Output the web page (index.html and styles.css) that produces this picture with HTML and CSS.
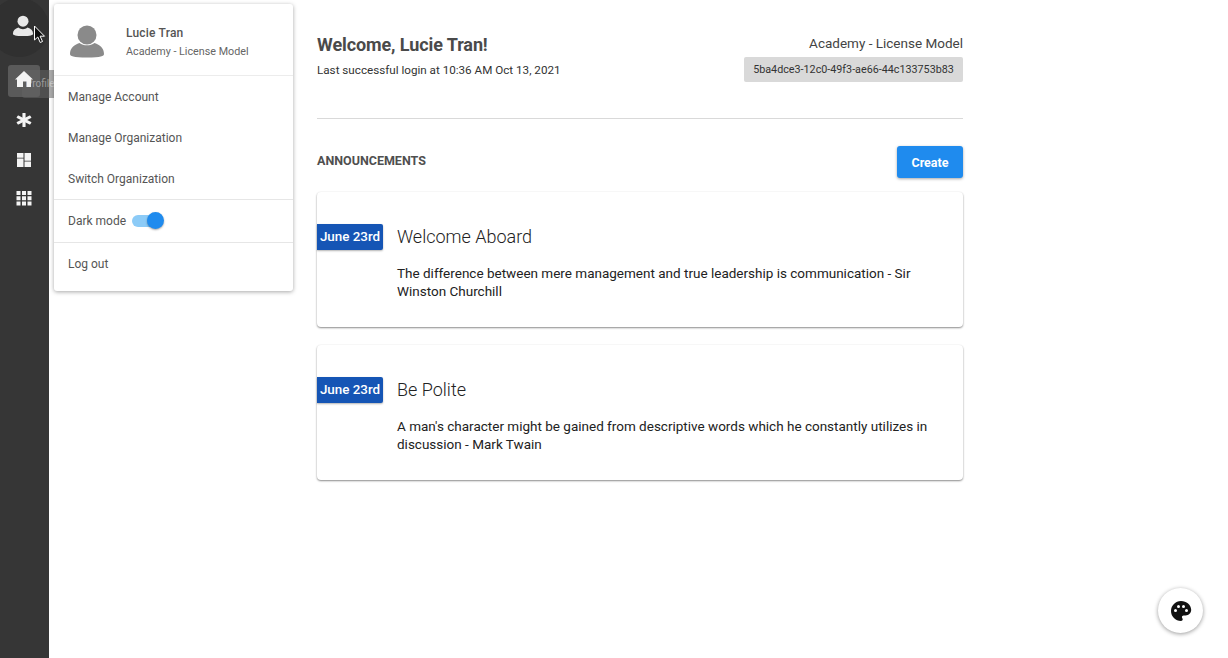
FILE: index.html
```html
<!DOCTYPE html>
<html lang="en">
<head>
<meta charset="utf-8">
<title>Welcome</title>
<link rel="stylesheet" href="styles.css">
</head>
<body>
<div class="app">
  <nav class="sidebar">
    <div class="profile-btn">
      <svg class="i-user" viewBox="0 0 24 24"><circle cx="12" cy="6.800" r="6"/><path d="M1 20.500c0-3.500 2.500-5.500 6-6.800 1.500 1.200 3.200 1.800 5 1.800s3.500-.6 5-1.800c3.500 1.300 6 3.300 6 6.800 0 1.500-3 2.500-11 2.500S1 22 1 20.500z"/></svg>
    </div>
    <div class="nav-item active">
      <svg class="i-nav i-home" viewBox="0 0 18 18"><path d="M9 1 0 9.500h2V17h6v-5.500h3.500V17H16V9.500h2z"/></svg>
      <div class="tooltip">Profile</div>
    </div>
    <div class="nav-item">
      <svg class="i-nav" viewBox="0 0 18 18"><g transform="translate(9 9) scale(1.120 1) translate(-9 -9)"><rect x="7.600" y="2" width="2.800" height="14" rx=".5"/><rect x="7.600" y="2" width="2.800" height="14" rx=".5" transform="rotate(60 9 9)"/><rect x="7.600" y="2" width="2.800" height="14" rx=".5" transform="rotate(120 9 9)"/></g></svg>
    </div>
    <div class="nav-item">
      <svg class="i-nav i-dash" viewBox="0 0 18 18"><path d="M2 2h6.500v4.700H2zM2 7.500h6.500V16H2zM9.500 2H16v7.700H9.500zM9.500 10.500H16V16H9.500z"/></svg>
    </div>
    <div class="nav-item">
      <svg class="i-nav" viewBox="0 0 18 18"><path d="M1.500 2h4v4h-4zM7 2h4v4H7zM12.500 2h4v4h-4zM1.500 7.300h4v4h-4zM7 7.300h4v4H7zM12.500 7.300h4v4h-4zM1.500 12.600h4v4h-4zM7 12.600h4v4H7zM12.500 12.600h4v4h-4z"/></svg>
    </div>
  </nav>

  <main class="main">
    <section class="head">
      <div>
        <h1 class="welcome">Welcome, Lucie Tran!</h1>
        <p class="last-login">Last successful login at 10:36 AM Oct 13, 2021</p>
      </div>
      <div class="org">
        <div class="org-name">Academy - License Model</div>
        <div class="org-id">5ba4dce3-12c0-49f3-ae66-44c133753b83</div>
      </div>
    </section>
    <section class="ann-head">
      <h2 class="ann-title">ANNOUNCEMENTS</h2>
      <button class="create">Create</button>
    </section>
    <article class="card">
      <div class="date">June 23rd</div>
      <div class="card-body">
        <h3 class="card-title">Welcome Aboard</h3>
        <p class="card-text">The difference between mere management and true leadership is communication - Sir Winston Churchill</p>
      </div>
    </article>
    <article class="card">
      <div class="date">June 23rd</div>
      <div class="card-body">
        <h3 class="card-title">Be Polite</h3>
        <p class="card-text">A man's character might be gained from descriptive words which he constantly utilizes in discussion - Mark Twain</p>
      </div>
    </article>
  </main>
</div>

<div class="menu">
  <div class="menu-user">
    <svg class="i-avatar" viewBox="0 0 34 33"><circle cx="17" cy="10" r="9.500"/><path d="M0 29c0-6 4-9 9.500-11 2 1.600 4.800 2.300 7.500 2.300s5.500-.7 7.500-2.300C30 20 34 23 34 29c0 2-3 3.500-17 3.500S0 31 0 29z"/></svg>
    <div class="user-text">
      <div class="user-name">Lucie Tran</div>
      <div class="user-org">Academy - License Model</div>
    </div>
  </div>
  <div class="menu-group">
    <div class="menu-item">Manage Account</div>
    <div class="menu-item">Manage Organization</div>
    <div class="menu-item">Switch Organization</div>
  </div>
  <div class="menu-toggle">
    <span>Dark mode</span>
    <span class="switch"><span class="knob"></span></span>
  </div>
  <div class="menu-logout">Log out</div>
</div>

<svg class="cursor" viewBox="0 0 12 19"><path d="M1 1v14l3.300-3 2.400 5.500 2.300-1-2.400-5.300H11z" fill="#111" stroke="#fff" stroke-width="1"/></svg>

<button class="fab" aria-label="Theme">
  <svg viewBox="0 0 24 24"><path fill-rule="evenodd" d="M12 2C6.500 2 2 6.500 2 12s4.500 10 10 10c.9 0 1.700-.7 1.700-1.700 0-.4-.2-.8-.4-1.100-.3-.3-.4-.7-.4-1.100 0-.9.700-1.700 1.700-1.700h2c3.100 0 5.600-2.500 5.600-5.600C22 5.900 17.500 2 12 2zM6.500 13a1.500 1.500 0 1 1 0-3 1.500 1.500 0 0 1 0 3zm3-4a1.500 1.500 0 1 1 0-3 1.500 1.500 0 0 1 0 3zm5 0a1.500 1.500 0 1 1 0-3 1.500 1.500 0 0 1 0 3zm3 4a1.500 1.500 0 1 1 0-3 1.500 1.500 0 0 1 0 3z"/></svg>
</button>
</body>
</html>
```

FILE: styles.css
```css
* { box-sizing: border-box; }
html, body { margin: 0; height: 100%; overflow: hidden; }
body { font-family: Roboto, "Liberation Sans", sans-serif; background: #fff; color: #111; }
h1, h2, h3, p { margin: 0; }

.app { display: flex; height: 658px; }

.sidebar { width: 49px; flex: none; background: #363636; display: flex; flex-direction: column; }
.profile-btn { position: relative; height: 65px; flex: none; padding: 15px 0 0 12px; }
.profile-btn::before { content: ""; position: absolute; left: -10px; top: -2px; width: 59px; height: 59px; border-radius: 50%; background: #303030; }
.i-user { position: relative; width: 22px; height: 22px; fill: #e8e8e8; display: block; }
.nav-item { width: 32px; height: 32px; margin: 0 0 7px 8px; display: flex; align-items: center; justify-content: center; border-radius: 3px; flex: none; }
.nav-item.active { background: #5a5a5a; }
.i-nav { position: relative; z-index: 1; width: 18px; height: 18px; fill: #f4f4f4; display: block; }
.i-home { margin-bottom: 4px; }
.i-dash { margin-top: 2px; }

.main { width: 646px; margin-left: 268px; flex: none; }
.head { display: flex; justify-content: space-between; height: 119px; padding-top: 34px; border-bottom: 1px solid #d9d9d9; }
.welcome { font-size: 18px; line-height: 22px; font-weight: 700; color: #4a4a4a; letter-spacing: -.1px; }
.last-login { font-size: 11.660px; line-height: 16px; margin-top: 6px; color: #333; }
.org { display: flex; flex-direction: column; align-items: flex-end; }
.org-name { font-size: 13.500px; line-height: 18px; color: #444; }
.org-id { width: 219px; height: 25px; margin-top: 5px; background: #d9d9d9; border-radius: 2px; font-size: 10.750px; line-height: 25px; text-align: center; color: #333; }

.ann-head { display: flex; justify-content: space-between; align-items: center; height: 32px; margin: 27px 0 14px; }
.ann-title { font-size: 12.500px; line-height: 16px; margin-bottom: 2px; font-weight: 700; color: #4f4f4f; }
.create { width: 66px; height: 32px; border: 0; padding: 0; background: #1f8bee; color: #fff; border-radius: 3px; font: 700 12.500px Roboto, sans-serif; box-shadow: 0 1px 3px rgba(0,0,0,.35); }

.card { display: flex; height: 135px; margin-bottom: 18px; padding-top: 32px; background: #fff; border-radius: 4px; box-shadow: 0 1px 2px rgba(0,0,0,.45), 0 0 2px rgba(0,0,0,.04); }
.date { width: 66px; height: 26px; flex: none; background: #1555b5; color: #fff; font-size: 13.400px; font-weight: 500; line-height: 26px; text-align: center; border-radius: 0 2px 2px 0; box-shadow: 0 1px 2px rgba(0,0,0,.3); }
.card-body { margin-left: 14px; width: 540px; }
.card-title { font-size: 18px; line-height: 26px; font-weight: 300; color: #222; }
.card-text { font-size: 13.500px; line-height: 18px; margin-top: 14px; color: #222; }

.tooltip { position: absolute; left: 22px; top: 70px; width: 40px; height: 28px; padding-left: 4px; background: rgba(100,100,100,.55); color: rgba(255,255,255,.42); border-radius: 3px; font-size: 10px; line-height: 28px; }

.menu { position: absolute; left: 54px; top: 4px; width: 239px; height: 287px; background: #fff; border-radius: 3px; box-shadow: 0 1px 4px rgba(0,0,0,.35); color: #555; }
.menu-user { display: flex; align-items: center; height: 72px; padding: 0 0 0 16px; border-bottom: 1px solid #ececec; }
.i-avatar { width: 34px; height: 33px; fill: #8a8a8a; flex: none; margin-top: 4px; }
.user-text { margin: 6px 0 0 22px; }
.user-name { font-size: 12px; font-weight: 500; line-height: 16px; color: #555; letter-spacing: .2px; }
.user-org { font-size: 10.750px; line-height: 16px; margin-top: 3px; color: #666; }
.menu-group { border-bottom: 1px solid #e6e6e6; height: 124px; }
.menu-item { height: 41px; padding-left: 14px; font-size: 12px; line-height: 42px; color: #555; }
.menu-toggle { display: flex; align-items: center; height: 43px; padding-left: 14px; border-bottom: 1px solid #e6e6e6; font-size: 12px; }
.switch { position: relative; width: 26px; height: 12px; margin-left: 6px; background: #8ccbf7; border-radius: 6px; }
.knob { position: absolute; right: -6px; top: -3px; width: 17px; height: 17px; border-radius: 50%; background: #1f8bee; box-shadow: 0 1px 2px rgba(0,0,0,.35); }
.menu-logout { height: 43px; padding-left: 14px; font-size: 12px; line-height: 42px; color: #555; }

.cursor { position: absolute; left: 33px; top: 25px; width: 13px; height: 19px; }

.fab { position: fixed; left: 1158px; top: 588px; width: 45px; height: 45px; padding: 0; border: 0; border-radius: 50%; background: #fff; box-shadow: 0 1px 4px rgba(0,0,0,.4); display: flex; align-items: center; justify-content: center; }
.fab svg { width: 24px; height: 24px; fill: #111; display: block; }
```
